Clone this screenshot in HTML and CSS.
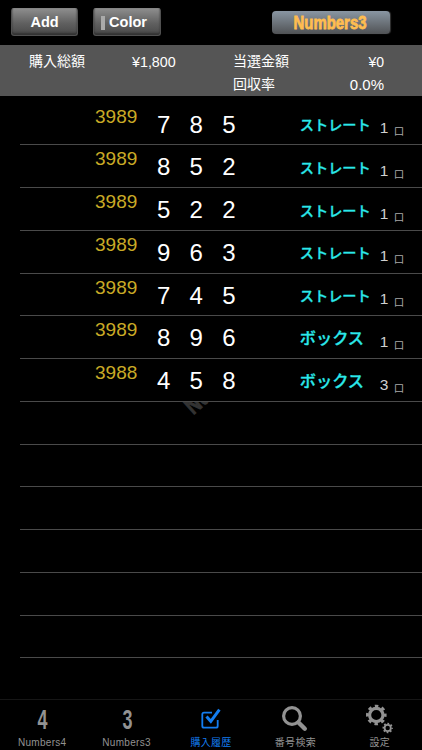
FILE: index.html
```html
<!DOCTYPE html>
<html lang="ja">
<head>
    <meta charset="UTF-8">
    <title>購入履歴</title>
    <link rel="stylesheet" href="styles.css">
</head>
<body>

<header class="toolbar">
    <button class="btn add" type="button">Add</button>
    <button class="btn color" type="button"><span class="swatch"></span>Color</button>
    <button class="game" type="button">
        <svg width="118" height="23"><text x="21.5" y="17.8" textLength="73" lengthAdjust="spacingAndGlyphs">Numbers3</text></svg>
    </button>
</header>

<section class="summary">
    <span class="label">購入総額</span>
    <span class="total">¥1,800</span>
    <span class="label">当選金額</span>
    <span class="amount">¥0</span>
    <span class="label rate">回収率</span>
    <span class="amount">0.0%</span>
</section>

<main class="history">
    <div class="watermark">Numbers3</div>
    <ul id="rows"></ul>
</main>

<nav class="tabs">
    <a class="tab">
        <svg width="30" height="34" viewBox="0 0 30 34"><text class="num" x="15.5" y="29" textLength="10" lengthAdjust="spacingAndGlyphs">4</text></svg>
        <span>Numbers4</span>
    </a>
    <a class="tab">
        <svg width="30" height="34" viewBox="0 0 30 34"><text class="num" x="15.5" y="29" textLength="10" lengthAdjust="spacingAndGlyphs">3</text></svg>
        <span>Numbers3</span>
    </a>
    <a class="tab active">
        <svg width="30" height="34" viewBox="0 0 30 34" fill="none" stroke="currentColor">
            <path d="M16 12.7H8q-1.7 0-1.7 1.7v11.5q0 1.7 1.7 1.7h12q1.7 0 1.7-1.7V20" stroke-width="1.8"/>
            <path d="M10.5 16.5l4.3 4.8L23.4 9.7" stroke-width="3"/>
        </svg>
        <span>購入履歴</span>
    </a>
    <a class="tab">
        <svg width="30" height="34" viewBox="0 0 30 34" fill="none" stroke="currentColor">
            <circle cx="12" cy="16" r="8.4" stroke-width="3.2"/>
            <path d="M18.5 22.5l6.3 6.2" stroke-width="4.4" stroke-linecap="round"/>
        </svg>
        <span>番号検索</span>
    </a>
    <a class="tab">
        <svg width="30" height="34" viewBox="0 0 30 34" fill="none" stroke="currentColor">
            <circle cx="11.3" cy="15" r="6.7" stroke-width="3.2"/>
            <circle cx="11.3" cy="15" r="8.9" stroke-width="2.8" stroke-dasharray="3.5 3.49" stroke-dashoffset="1.75"/>
            <circle cx="22.7" cy="28" r="3.1" stroke-width="1.8"/>
            <circle cx="22.7" cy="28" r="4.4" stroke-width="1.6" stroke-dasharray="1.73 1.725" stroke-dashoffset=".86"/>
        </svg>
        <span>設定</span>
    </a>
</nav>

<script src="script.js"></script>
</body>
</html>
```
FILE: styles.css
```css
* {
    box-sizing: border-box;
}

body {
    display: flex;
    flex-direction: column;
    height: 750px;
    margin: 0;
    overflow: hidden;
    background: #000;
    color: #fff;
    font-family: "Liberation Sans", "Noto Sans CJK JP", sans-serif;
}

.toolbar {
    display: flex;
    align-items: flex-start;
    height: 45px;
    padding: 8px 32px 0 11px;
}

.btn {
    height: 28px;
    padding: 0 0 1px;
    border: 1px solid #505050;
    border-top-color: #858585;
    border-radius: 3px;
    background: linear-gradient(#8c8c8c, #606060 55%, #484848);
    box-shadow: inset 0 -2px 2px #333;
    color: #fff;
    font: bold 14.5px "Liberation Sans", sans-serif;
}

.add {
    width: 67px;
    margin-right: 15px;
}

.color {
    display: flex;
    align-items: center;
    justify-content: center;
    width: 68px;
    padding-right: 6px;
}

.swatch {
    width: 4px;
    height: 14px;
    margin: 3px 4px 0 0;
    background: #aaa;
}

.game {
    width: 118px;
    height: 23px;
    margin: 3px 0 0 auto;
    padding: 0;
    border: 0;
    border-radius: 4px;
    background: linear-gradient(#8996a3, #6d747b 50%, #505255);
    box-shadow: 1px 0 1px #333;
}

.game svg {
    display: block;
}

.game text {
    fill: #ffbd50;
    stroke: #ffbd50;
    stroke-width: .8px;
    font-size: 18px;
    font-weight: bold;
}

.summary {
    display: grid;
    grid-template-columns: 103px 101px 76px 75px;
    grid-template-rows: 23px 23px;
    height: 51px;
    padding: 5px 0 0 29px;
    background: #555;
    font-size: 14px;
    line-height: 23px;
}

.total {
    padding-top: 1px;
    font-size: 14.3px;
}

.amount {
    padding-top: 1px;
    text-align: right;
}

.amount:last-child {
    padding-top: 0;
    font-size: 15px;
}

.rate {
    grid-column: 3;
}

.history {
    position: relative;
    flex: 1;
    padding: 6.5px 0 0 20px;
    overflow: hidden;
}

.history ul {
    position: relative;
    margin: 0;
    padding: 0;
    list-style: none;
}

.history li {
    display: flex;
    height: 42.75px;
    padding-left: 75px;
    border-bottom: 1px solid #4a4a4a;
}

.history li.filled {
    background: #000;
}

.draw {
    width: 62px;
    padding-top: 3px;
    color: #c9aa26;
    font-size: 19px;
    line-height: 22px;
}

.digit {
    width: 32.6px;
    padding-top: 8px;
    font-size: 24px;
    line-height: 27px;
}

.kind {
    width: 80px;
    margin-left: 45px;
    padding-top: 11.5px;
    color: #2be8ea;
    font-size: 14.2px;
    font-weight: 500;
    line-height: 22px;
    white-space: nowrap;
    -webkit-text-stroke: .3px #2be8ea;
}

.kind.box {
    padding-top: 11px;
    font-size: 16.2px;
}

.count {
    width: 14px;
    padding-top: 14.5px;
    color: #d0d0d0;
    font-size: 15.5px;
    line-height: 22px;
}

.unit {
    padding-top: 18.5px;
    color: #aaa;
    font-size: 10.5px;
    line-height: 20px;
}

/* sits behind the filled rows, only the tail shows */
.watermark {
    position: absolute;
    top: 300px;
    left: 194px;
    color: #333;
    font-size: 25px;
    font-weight: bold;
    line-height: 20px;
    -webkit-text-stroke: 1px #333;
    transform: rotate(-42deg) scaleX(.75);
    transform-origin: 0 100%;
}

.tabs {
    display: flex;
    height: 51px;
    border-top: 1px solid #161616;
}

.tab {
    display: flex;
    flex: 1;
    flex-direction: column;
    align-items: center;
    color: #929292;
    font-size: 10px;
    line-height: 14px;
}

.tab svg {
    height: 34px;
    margin-bottom: 2px;
}

.tab span {
    letter-spacing: .3px;
}

.num {
    fill: #929292;
    font-size: 27px;
    font-weight: bold;
    text-anchor: middle;
}

.active {
    color: #137df0;
}
```
FILE: script.js
```js
const tickets = [
    [3989, '785', 'ストレート', 1],
    [3989, '852', 'ストレート', 1],
    [3989, '522', 'ストレート', 1],
    [3989, '963', 'ストレート', 1],
    [3989, '745', 'ストレート', 1],
    [3989, '896', 'ボックス', 1],
    [3988, '458', 'ボックス', 3]
];
const rowCount = 13;
const rows = document.querySelector('#rows');

for (let i = 0; i < rowCount; i++) {
    const li = document.createElement('li');
    if (i < tickets.length) {
        const [draw, number, kind, count] = tickets[i];
        li.className = 'filled';
        li.innerHTML = `<span class="draw">${draw}</span>`
            + [...number].map(d => `<span class="digit">${d}</span>`).join('')
            + `<span class="kind ${kind === 'ボックス' ? 'box' : ''}">${kind}</span>`
            + `<span class="count">${count}</span><span class="unit">口</span>`;
    }
    rows.appendChild(li);
}
```
